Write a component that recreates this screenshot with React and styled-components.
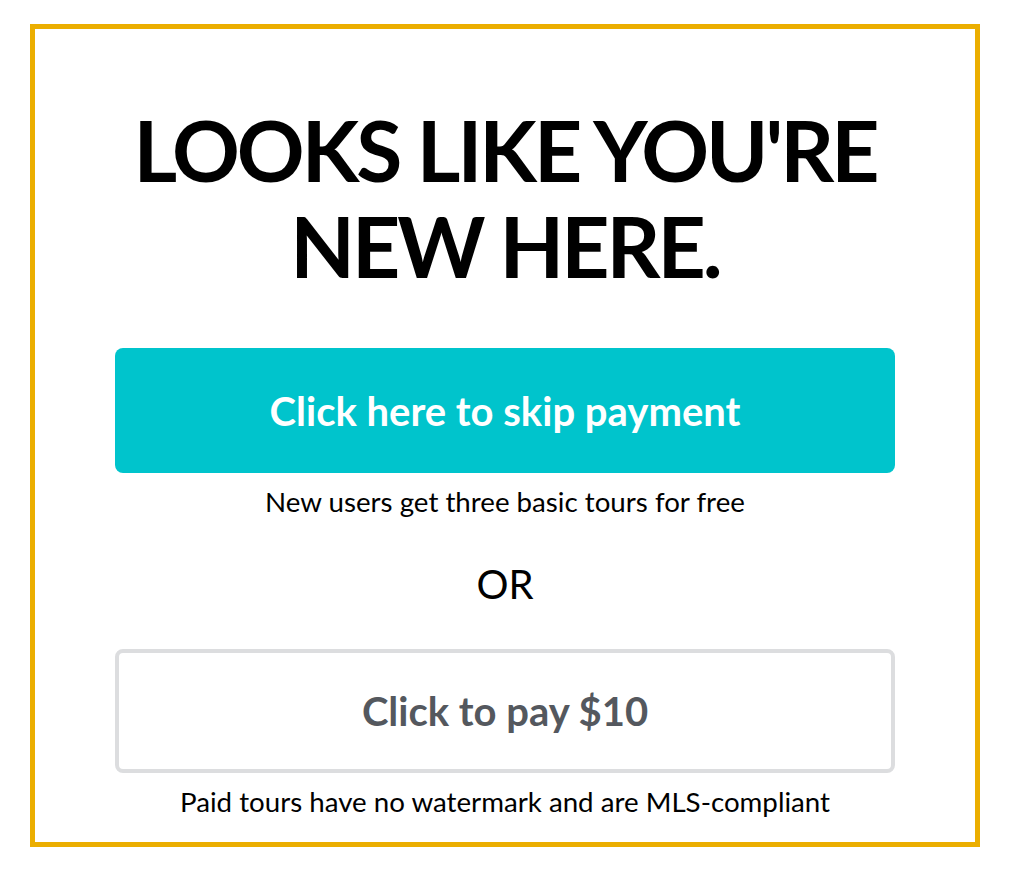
import React from "react"
import styled, {createGlobalStyle} from "styled-components"

const GlobalStyle = createGlobalStyle`
  body {
    margin: 0;
    background: #ffffff;
    font-family: Lato, "Open Sans", sans-serif;
  }
`

const Frame = styled.div`
  box-sizing: border-box;
  width: 950px;
  margin: 24px 0 0 30px;
  padding: 73px 0 23px;
  border: 5px solid #ebae00;
  display: flex;
  flex-direction: column;
  align-items: center;
  text-align: center;
`

const Heading = styled.h1`
  margin: 0;
  font-size: 84px;
  line-height: 96px;
  font-weight: 700;
  letter-spacing: -3px;
  color: #000;
`

const Button = styled.button`
  box-sizing: border-box;
  width: 780px;
  height: ${(p) => p.h}px;
  margin-top: ${(p) => p.top}px;
  display: flex;
  align-items: center;
  justify-content: center;
  border-radius: 8px;
  font-family: Lato, sans-serif;
  font-size: 40px;
  font-weight: 700;
  cursor: pointer;
  background: ${(p) => (p.primary ? "#00c4cc" : "#ffffff")};
  color: ${(p) => (p.primary ? "#ffffff" : "#54585e")};
  border: ${(p) => (p.primary ? "none" : "4px solid #dcdddf")};
`

const Note = styled.p`
  margin: 12px 0 0;
  font-size: 27.7px;
  line-height: 34px;
  color: #000;
`

const Divider = styled.div`
  margin-top: 41px;
  font-size: 40px;
  line-height: 48px;
  color: #000;
`

export default function App() {
  return (
    <>
      <GlobalStyle />
      <Frame>
        <Heading>
          LOOKS LIKE YOU'RE
          <br />
          NEW HERE.
        </Heading>
        <Button primary h={125} top={54}>
          Click here to skip payment
        </Button>
        <Note>New users get three basic tours for free</Note>
        <Divider>OR</Divider>
        <Button h={124} top={41}>
          Click to pay $10
        </Button>
        <Note>Paid tours have no watermark and are MLS-compliant</Note>
      </Frame>
    </>
  )
}
